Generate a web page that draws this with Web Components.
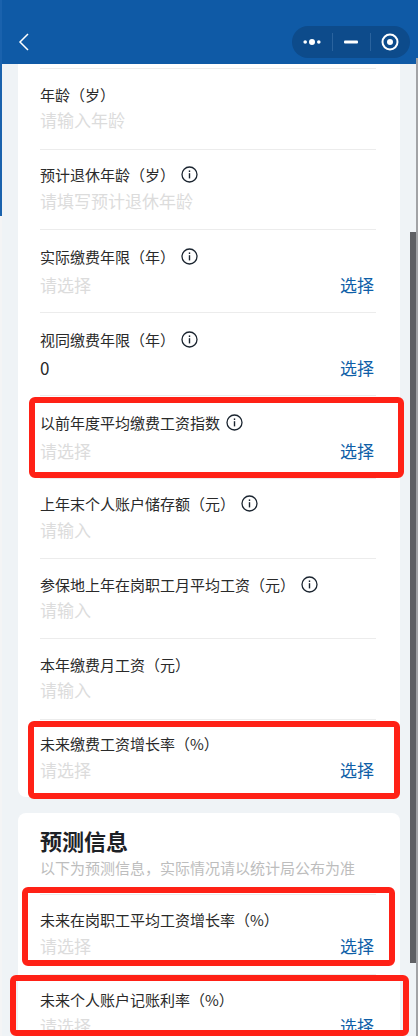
<!DOCTYPE html>
<html lang="zh"><head><meta charset="utf-8"><title>预测信息</title>
<style>
html,body{margin:0;padding:0;background:#fff;height:1036px;overflow:hidden}
body{font-family:"Noto Sans CJK SC","Noto Sans",sans-serif;}
</style></head><body>
<app-shell>
  <form-card first>
    <form-row label="年龄（岁）" ph="请输入年龄"></form-row>
    <form-row label="预计退休年龄（岁）" info ph="请填写预计退休年龄"></form-row>
    <form-row label="实际缴费年限（年）" info ph="请选择" select tall></form-row>
    <form-row label="视同缴费年限（年）" info value="0" select tall></form-row>
    <form-row label="以前年度平均缴费工资指数" info ph="请选择" select tall></form-row>
    <form-row label="上年末个人账户储存额（元）" info ph="请输入"></form-row>
    <form-row label="参保地上年在岗职工月平均工资（元）" info ph="请输入"></form-row>
    <form-row label="本年缴费月工资（元）" ph="请输入"></form-row>
    <form-row label="未来缴费工资增长率（%）" ph="请选择" select last></form-row>
  </form-card>
  <form-card>
    <section-head title="预测信息" sub="以下为预测信息，实际情况请以统计局公布为准"></section-head>
    <form-row label="未来在岗职工平均工资增长率（%）" ph="请选择" select></form-row>
    <form-row label="未来个人账户记账利率（%）" ph="请选择" select></form-row>
  </form-card>
  <mark-box style="left:29px;top:397px;width:375px;height:81px"></mark-box>
  <mark-box style="left:28px;top:721px;width:372px;height:78px"></mark-box>
  <mark-box style="left:22px;top:887px;width:373px;height:79px"></mark-box>
  <mark-box style="left:10px;top:975px;width:399px;height:61px"></mark-box>
</app-shell>
<script>
const def=(name,html,init)=>customElements.define(name,class extends HTMLElement{
  constructor(){super();this.attachShadow({mode:'open'}).innerHTML=html;}
  connectedCallback(){init&&init(this,this.shadowRoot);}
});
def('nav-bar',`<style>
:host{display:flex;flex:none;align-items:center;justify-content:space-between;height:64px;box-sizing:border-box;background:#0f5aa6;padding:19px 6px 0 15px}
.pill{display:flex;align-items:center;width:118px;height:32px;border-radius:16px;background:#0d4b8b;box-sizing:border-box}
.pill span{display:flex;flex:1;height:100%;align-items:center;justify-content:center}
.pill span+span{position:relative}
.pill span+span::before{content:"";position:absolute;left:0;top:7px;bottom:7px;width:1px;background:#2a639e}
svg{display:block}
</style>
<svg width="14" height="20" viewBox="0 0 14 20"><path d="M11 2 3 10l8 8" fill="none" stroke="#fff" stroke-width="1.5"/></svg>
<div class="pill">
<span style="flex:0 0 40px"><svg width="20" height="8" viewBox="0 0 20 8"><circle cx="3.2" cy="4" r="1.8" fill="#fff"/><circle cx="10" cy="4" r="3" fill="#fff"/><circle cx="16.8" cy="4" r="1.8" fill="#fff"/></svg></span>
<span style="flex:0 0 38px"><svg width="14" height="4" viewBox="0 0 14 4"><rect y=".5" width="14" height="3" rx="1" fill="#fff"/></svg></span>
<span style="flex:0 0 40px"><svg width="18" height="18" viewBox="0 0 18 18"><circle cx="9" cy="9" r="7.5" fill="none" stroke="#fff" stroke-width="2"/><circle cx="9" cy="9" r="3" fill="#fff"/></svg></span>
</div>`);
def('app-shell',`<style>
:host{display:block;position:relative;width:418px;height:1036px;overflow:hidden;background:#fff}
.frame{display:grid;grid-template-columns:2px 414px 2px;height:100%}
.edge-l{background:linear-gradient(#1a62ad 0 216px,#f4f4f5 216px)}
.edge-r{background:linear-gradient(#0f5aa6 0 58px,#a2a3a6 58px 100%)}
.main{display:flex;flex-direction:column;min-height:0;background:#eff3f6}
.scroll{flex:1;min-height:0;overflow:hidden;display:flex;flex-direction:column;gap:16px;padding:0 16px;}
.thumb{position:absolute;left:410px;top:232px;width:6px;height:731px;background:#5f6064}
</style>
<div class="frame"><div class="edge-l"></div>
<div class="main"><nav-bar></nav-bar><div class="scroll"><slot></slot></div></div>
<div class="edge-r"></div></div><div class="thumb"></div>`);
def('form-card',`<style>
:host{display:block;background:#fff;border-radius:8px;padding:0 24px 0 22px;flex:none}
:host([first]){border-radius:0 0 8px 8px;padding-top:4.3px}
:host(:not([first])){padding-top:12px}
</style><slot></slot>`);
def('section-head',`<style>
:host{display:block;padding-bottom:13px}
h2{margin:0;font-size:22px;line-height:30px;font-weight:700;color:#1d2126}
p{margin:0;font-size:15px;line-height:26px;color:#bdbdbd}
</style><h2></h2><p></p>`,(el,r)=>{r.querySelector('h2').textContent=el.getAttribute('title');r.querySelector('p').textContent=el.getAttribute('sub');});
def('info-icon',`<style>:host{display:inline-flex;margin-left:6px}svg{display:block}</style>
<svg width="17" height="17" viewBox="0 0 17 17"><circle cx="8.5" cy="8.5" r="7.5" fill="none" stroke="#1b2530" stroke-width="1.3"/><rect x="7.8" y="7.2" width="1.4" height="5.2" fill="#1b2530"/><rect x="7.8" y="4.4" width="1.4" height="1.6" fill="#1b2530"/></svg>`);
def('form-row',`<style>
:host{display:block;border-top:1px solid #ececec;padding:14px 0 14.25px}
:host([tall]){padding:16px 0 10px}
:host([last]){padding:13px 0 13px}
.label{display:flex;align-items:center;height:22px;font-size:15px;color:#2a2a2a}
.line{display:flex;align-items:center;justify-content:space-between;height:29px}
:host([tall]) .line{height:34px}
.val{font-size:17px;color:#dcdcdc}
.val.filled{color:#2a2a2a}
.act{font-size:17px;color:#0f5fa8;margin-right:2px}
</style>
<div class="label"><span id="l"></span></div>
<div class="line"><span class="val" id="v"></span></div>`,(el,r)=>{
  r.getElementById('l').textContent=el.getAttribute('label');
  if(el.hasAttribute('info'))r.querySelector('.label').append(document.createElement('info-icon'));
  const v=r.getElementById('v');
  if(el.hasAttribute('value')){v.textContent=el.getAttribute('value');v.classList.add('filled');}else v.textContent=el.getAttribute('ph');
  if(el.hasAttribute('select')&&!r.querySelector('.act')){const a=document.createElement('span');a.className='act';a.textContent='选择';r.querySelector('.line').append(a);}
});
def('mark-box',`<style>:host{display:block;position:absolute;box-sizing:border-box;border:6px solid #ff2116;border-radius:6px;pointer-events:none}</style>`);
</script>
</body></html>
